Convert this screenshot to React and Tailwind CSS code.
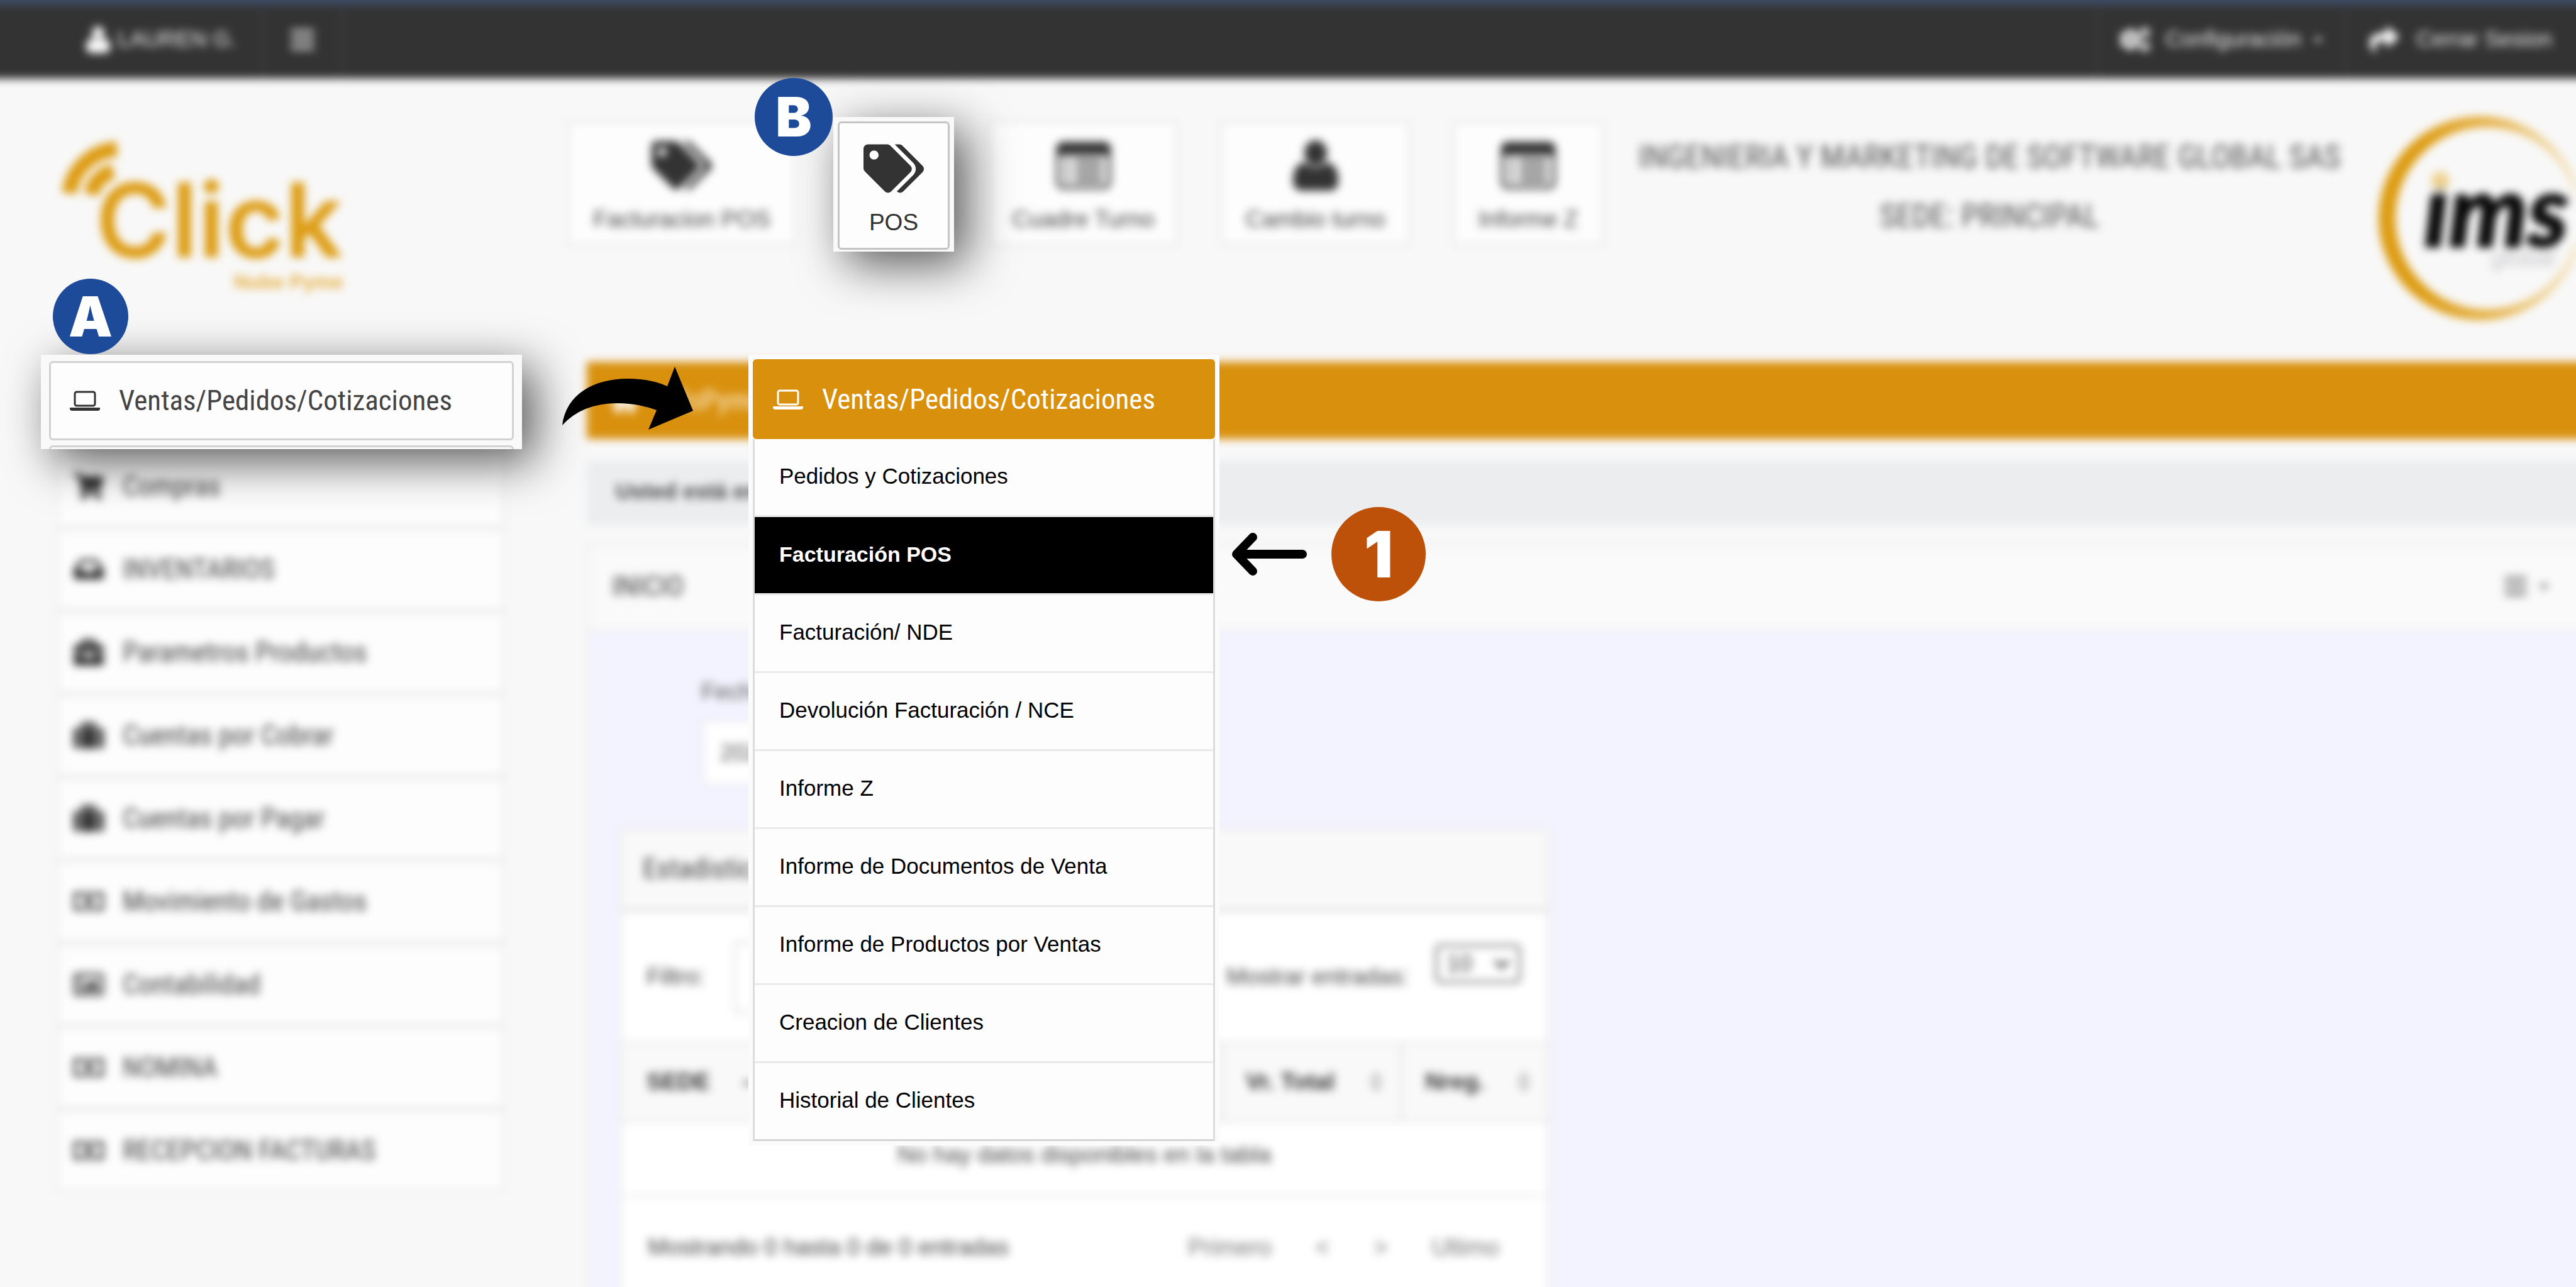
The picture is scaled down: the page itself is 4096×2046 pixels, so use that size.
import React from "react";
import {
  FaTags, FaShoppingCart, FaInbox, FaBriefcase, FaSuitcase, FaRegMoneyBillAlt,
  FaRegImage, FaCogs, FaShare, FaBars, FaCaretDown, FaHome, FaChevronDown,
} from "react-icons/fa";

const BODY = "font-['Liberation_Sans',Arial,sans-serif]";
const TITLE = "font-['Roboto_Condensed','Roboto',sans-serif]";

function Laptop({ className }) {
  return (
    <svg viewBox="0 0 48 32" className={className} fill="none" stroke="currentColor" aria-hidden="true">
      <rect x="8" y="2" width="32" height="22" rx="3" strokeWidth="3" />
      <path d="M0 27h48v2q0 3-4 3H4q-4 0-4-3z" fill="currentColor" stroke="none" />
    </svg>
  );
}

function Person({ className }) {
  return (
    <svg viewBox="0 0 72 80" className={className} fill="currentColor" aria-hidden="true">
      <ellipse cx="36" cy="20" rx="18" ry="20" />
      <path d="M18 35q18 16 36 0 18 4 18 29 0 16-14 16H14Q0 80 0 64q0-25 18-29z" />
    </svg>
  );
}

function ListPanel({ className }) {
  return (
    <svg viewBox="0 0 88 76" className={className} fill="none" stroke="currentColor" aria-hidden="true">
      <rect x="3" y="3" width="82" height="70" rx="8" strokeWidth="5" />
      <path d="M3 10q0-7 8-7h66q8 0 8 7v12H3z" fill="currentColor" stroke="none" />
      <path d="M14 32h8M14 46h8M14 60h8M30 32h44M30 46h44M30 60h44" strokeWidth="6" />
    </svg>
  );
}

function ClickLogo() {
  return (
    <svg viewBox="0 0 460 260" className="h-[260px] w-[460px]" role="img" aria-label="Click Nube Pyme">
      <g fill="none" stroke="#dd9c12" strokeWidth="24">
        <path d="M14 84A82 82 0 0 1 90 14" />
        <path d="M49 86A49 49 0 0 1 84 49" />
      </g>
      <text x="56" y="186" fontFamily="Inter, sans-serif" fontWeight="600" fontSize="163" fill="#dd9c12">Click</text>
      <text x="450" y="236" textAnchor="end" fontFamily="Liberation Sans, sans-serif" fontWeight="700" fontSize="32" fill="#e5ac3c">Nube Pyme</text>
    </svg>
  );
}

function ImsLogo() {
  return (
    <svg viewBox="0 0 320 324" className="mt-[60px] mr-4 h-[324px] w-[320px] shrink-0" role="img" aria-label="ims global">
      <defs>
        <linearGradient id="ring" x1="0" x2="1" y1="0" y2="0">
          <stop offset="0.2" stopColor="#dd9c12" />
          <stop offset="0.6" stopColor="#e6b44c" />
          <stop offset="1" stopColor="#f6e6c4" />
        </linearGradient>
        <linearGradient id="ims" gradientUnits="userSpaceOnUse" x1="0" x2="0" y1="112" y2="118">
          <stop offset="0" stopColor="#efd28f" />
          <stop offset="1" stopColor="#0a0a0a" />
        </linearGradient>
      </defs>
      <path fillRule="evenodd" fill="url(#ring)" d="M168 0a162 162 0 1 0 .1 0zM178 17a145 145 0 1 1-.1 0z" />
      <text x="78" y="207" fontFamily="Lato, sans-serif" fontWeight="900" fontStyle="italic" fontSize="158" fill="url(#ims)" stroke="url(#ims)" strokeWidth="3">ims</text>
      <text x="185" y="238" fontFamily="Liberation Sans, sans-serif" fontStyle="italic" fontSize="38" fill="#c4c4c8">global</text>
    </svg>
  );
}

const shortcuts = [
  { label: "Facturacion POS", width: "w-[366px]", icon: <FaTags className="size-[96px]" /> },
  { label: "POS", width: "w-[172px]", icon: <FaTags className="size-[96px]" /> },
  { label: "Cuadre Turno", width: "w-[303px]", icon: <ListPanel className="h-[76px] w-[88px]" /> },
  { label: "Cambio turno", width: "w-[303px]", icon: <Person className="h-[80px] w-[72px]" /> },
  { label: "Informe Z", width: "w-[242px]", icon: <ListPanel className="h-[76px] w-[88px]" /> },
];

const modules = [
  ["Compras", FaShoppingCart],
  ["INVENTARIOS", FaInbox],
  ["Parametros Productos", FaBriefcase],
  ["Cuentas por Cobrar", FaSuitcase],
  ["Cuentas por Pagar", FaSuitcase],
  ["Movimiento de Gastos", FaRegMoneyBillAlt],
  ["Contabilidad", FaRegImage],
  ["NOMINA", FaRegMoneyBillAlt],
  ["RECEPCION FACTURAS", FaRegMoneyBillAlt],
];

const salesMenu = [
  "Pedidos y Cotizaciones",
  "Facturación POS",
  "Facturación/ NDE",
  "Devolución Facturación / NCE",
  "Informe Z",
  "Informe de Documentos de Venta",
  "Informe de Productos por Ventas",
  "Creacion de Clientes",
  "Historial de Clientes",
];

function TopBar() {
  return (
    <header className="flex h-[141px] shrink-0 border-t-[24px] border-[#3d4c66] bg-[#333] px-4 text-[35px] text-[#f2f2f2]">
      <button className="flex w-[420px] items-center gap-3 border-r-4 border-[#3c3c3c] pb-2 pl-[137px] whitespace-nowrap">
        <Person className="h-[42px] w-[38px] shrink-0 text-white" />
        LAUREN G.
      </button>
      <button aria-label="Menú" className="flex w-[126px] items-center justify-center border-r-4 border-[#3c3c3c] pb-2">
        <FaBars className="size-[42px] text-[#ddd]" />
      </button>
      <button className="ml-auto flex w-[395px] items-center border-l-4 border-[#3c3c3c] pb-2 pl-[34px]">
        <FaCogs className="mr-[24px] size-[48px] shrink-0 text-white" />
        Configuración
        <FaCaretDown className="ml-4 size-[22px] shrink-0" />
      </button>
      <button className="flex w-[368px] items-center border-l-4 border-[#3c3c3c] pb-2 pl-[36px] whitespace-nowrap">
        <FaShare className="mr-[28px] size-[46px] shrink-0 text-white" />
        Cerrar Sesion
      </button>
    </header>
  );
}

function Masthead() {
  return (
    <div className="flex h-[450px] shrink-0 items-start pl-4">
      <div className="w-[901px] shrink-0 pt-[98px] pl-[96px]"><ClickLogo /></div>
      <nav className="flex shrink-0 gap-[66px] pt-[66px]">
        {shortcuts.map((s) => (
          <button key={s.label} className={`${s.width} flex h-[200px] flex-col items-center border-4 border-[#e9e9e9] bg-[#fdfdfd] pt-[28px] text-[37px] text-[#444]`}>
            <span className="flex h-[80px] items-center text-[#333]">{s.icon}</span>
            <span className="mt-[24px] leading-[44px] whitespace-nowrap">{s.label}</span>
          </button>
        ))}
      </nav>
      <div className={`${TITLE} flex-1 pt-[78px] text-center text-[51px] leading-[94px] whitespace-nowrap text-[#555]`}>
        <h1>INGENIERIA Y MARKETING DE SOFTWARE GLOBAL SAS</h1>
        <p>SEDE: PRINCIPAL</p>
      </div>
      <ImsLogo />
    </div>
  );
}

function Sidebar() {
  return (
    <aside className="w-[949px] shrink-0 pt-[128px] pl-[105px]">
      <ul className={`${TITLE} w-[714px] border-x-4 border-b-4 border-[#ececec] text-[44px] text-[#444]`}>
        {modules.map(([label, Icon]) => (
          <li key={label} className="h-[132px] border-t-[8px] border-[#ececec] bg-[#fdfdfd]">
            <a href="#" className="flex h-full items-center pl-[24px]">
              <span className="w-[78px]"><Icon className="size-[48px] text-[#333]" /></span>
              {label}
            </a>
          </li>
        ))}
      </ul>
    </aside>
  );
}

function SortMark() {
  return (
    <svg viewBox="0 0 20 36" className="h-[36px] w-[20px]" fill="none" stroke="#aaa" strokeWidth="3" aria-hidden="true">
      <path d="M3 14l7-10 7 10zM3 22l7 10 7-10z" />
    </svg>
  );
}

function SortedMark() {
  return (
    <svg viewBox="0 0 20 12" className="h-[12px] w-[20px]" fill="#999" aria-hidden="true">
      <path d="M0 12L10 0l10 12z" />
    </svg>
  );
}

function StatsPanel() {
  return (
    <section className="mx-[47px] mt-[64px] flex w-[1480px] flex-1 flex-col border-x-4 border-t-4 border-[#eaeaee] bg-white text-[37px] text-[#444]">
      <h3 className={`${TITLE} flex h-[132px] items-center border-b-[8px] border-[#e8e8e8] bg-[#f9f9f9] pl-[34px] text-[45px]`}>Estadisticas</h3>
      <div className="flex h-[204px] items-start pt-[46px] pr-[42px] pl-[40px]">
        <label htmlFor="filtro" className="mt-[28px] w-[138px]">Filtro:</label>
        <input id="filtro" className="h-[114px] w-[480px] border-4 border-[#e4e4e4] bg-white px-4" />
        <label htmlFor="entradas" className="mt-[28px] mr-[42px] ml-auto">Mostrar entradas:</label>
        <span className="relative mt-[4px]">
          <select id="entradas" className="block h-[62px] w-[136px] appearance-none rounded-lg border-4 border-[#777] bg-white pl-[14px] text-[37px] leading-[44px]">
            <option>10</option>
          </select>
          <FaChevronDown className="pointer-events-none absolute top-[18px] right-[16px] size-[28px] text-[#222]" />
        </span>
      </div>
      <table className="w-full border-collapse">
        <thead>
          <tr className="h-[126px] border-y-4 border-[#ebebeb] bg-[#f9f9f9] text-left text-[37px] text-[#333]">
            <th className="pl-[40px]"><span className="flex items-center gap-[50px]">SEDE <SortedMark /></span></th>
            <th className="w-[285px] border-l-4 border-[#e6e6e6] pl-[36px]"><span className="flex items-center gap-[56px]">Vr. Total <SortMark /></span></th>
            <th className="w-[232px] border-l-4 border-[#e6e6e6] pl-[36px]"><span className="flex items-center gap-[52px]">Nreg. <SortMark /></span></th>
          </tr>
        </thead>
        <tbody>
          <tr className="h-[118px] border-b-4 border-[#ebebeb]">
            <td colSpan={3} className="pb-[12px] text-center">No hay datos disponibles en la tabla</td>
          </tr>
        </tbody>
      </table>
      <div className="flex h-[160px] items-center pr-[76px] pl-[42px]">
        <span>Mostrando 0 hasta 0 de 0 entradas</span>
        <span className="ml-auto flex items-center gap-[70px] text-[38px] text-[#777]">
          <button>Primero</button><button>&lt;</button><button>&gt;</button><button>Ultimo</button>
        </span>
      </div>
    </section>
  );
}

function Content() {
  return (
    <main className="flex flex-1 flex-col">
      <div className={`${TITLE} flex h-[123px] shrink-0 items-center gap-[28px] bg-[#d9900d] pl-[36px] text-[45px] text-[#fbeccf]`}>
        <FaHome className="size-[48px] text-white" />
        <span>InfoPyme</span>
      </div>
      <div className="mt-[35px] flex h-[101px] shrink-0 items-center bg-[#ebedef] pb-1 pl-[46px] text-[35px] font-bold text-[#444]">Usted está en</div>
      <section className="mt-[32px] flex flex-1 flex-col border-t-4 border-l-4 border-[#eeeeee] bg-[#f3f3ff]">
        <div className={`${TITLE} flex h-[135px] shrink-0 items-center border-b-4 border-[#ececf0] bg-[#fafafa] pr-[54px] pb-2 pl-[36px] text-[45px] text-[#444]`}>
          <h2>INICIO</h2>
          <button aria-label="Opciones" className="ml-auto flex items-center gap-[12px] text-[#777]">
            <FaBars className="size-[40px]" />
            <FaCaretDown className="size-[26px]" />
          </button>
        </div>
        <div className="mt-[72px] ml-[178px] flex w-[420px] flex-col text-[37px] text-[#555]">
          <label htmlFor="fecha" className="leading-[46px]">Fecha:</label>
          <input id="fecha" defaultValue="2022" className="mt-[20px] h-[108px] border-4 border-[#e8e8f2] bg-white px-[26px]" />
        </div>
        <StatsPanel />
      </section>
    </main>
  );
}

export default function App() {
  return (
    <div className={`${BODY} relative flex min-h-screen flex-col overflow-hidden bg-[#f8f8f8]`}>
      <div className="-m-4 flex flex-1 flex-col bg-[#f8f8f8] blur-[7px]">
        <TopBar />
        <Masthead />
        <div className="flex flex-1">
          <Sidebar />
          <Content />
        </div>
      </div>

      {/* Highlighted sidebar entry */}
      <div className="absolute top-[564px] left-[65px] h-[150px] w-[765px] bg-[#f9f9f9] px-[13px] pt-[10px] shadow-[20px_20px_75px_rgba(0,0,0,0.65)]">
        <button className={`${TITLE} flex h-[126px] w-full items-center rounded-md border-[3px] border-[#d2d2d2] bg-[#fdfdfd] pl-[30px] text-[45px] text-[#444]`}>
          <Laptop className="mr-[30px] h-[32px] w-[48px] shrink-0 text-[#333]" />
          Ventas/Pedidos/Cotizaciones
        </button>
        <div className="mt-[8px] h-[6px] rounded-t-md border-x-[3px] border-t-[3px] border-[#d2d2d2]" />
      </div>

      {/* Highlighted shortcut */}
      <div className="absolute top-[186px] left-[1325px] h-[214px] w-[192px] bg-[#f9f9f9] p-[7px] shadow-[20px_20px_75px_rgba(0,0,0,0.65)]">
        <button className="flex h-[204px] w-full flex-col items-center rounded-md border-[3px] border-[#c4c4c4] bg-[#fdfdfd] pt-[24px] text-[37px] text-[#333]">
          <FaTags className="size-[96px]" />
          <span className="mt-[16px] leading-[44px]">POS</span>
        </button>
      </div>

      <span className="absolute top-[443px] left-[84px] flex size-[120px] items-center justify-center rounded-full bg-[#1d4a99] font-['Inter',sans-serif] text-[88px] font-black text-white">A</span>
      <span className="absolute top-[124px] left-[1200px] flex size-[124px] items-center justify-center rounded-full bg-[#1d4a99] font-['Inter',sans-serif] text-[86px] font-black text-white">B</span>

      {/* Open sales menu */}
      <nav className="absolute top-[564px] left-[1190px] w-[749px] bg-[#fbfbfb] p-[7px]">
        <button className={`${TITLE} flex h-[127px] w-full items-center rounded-md bg-[#d9900d] pl-[32px] text-[45px] text-white`}>
          <Laptop className="mr-[30px] h-[32px] w-[48px] shrink-0" />
          Ventas/Pedidos/Cotizaciones
        </button>
        <ul className="border-x-[3px] border-[#dcdcdc] bg-[#fdfdfd] text-[35px] text-black">
          {salesMenu.map((item) => (
            <li key={item} className="h-[124px] border-b-[3px] border-[#eaeaea] last:border-[#d4d4d4]">
              <a
                href="#"
                aria-current={item === "Facturación POS" ? "page" : undefined}
                className="flex h-full items-center pb-[2px] pl-[39px] aria-[current=page]:bg-black aria-[current=page]:text-[34px] aria-[current=page]:font-bold aria-[current=page]:text-white"
              >
                {item}
              </a>
            </li>
          ))}
        </ul>
      </nav>

      {/* Curved arrow from the sidebar entry to the menu */}
      <svg viewBox="0 0 208 100" className="absolute top-[583px] left-[894px] h-[100px] w-[208px]" aria-hidden="true">
        <path d="M0 93C6 44 50 19 104 19q36 0 63 12L179 0l29 70-71 30 13-31Q120 58 88 58 32 58 0 93z" />
      </svg>

      {/* Step marker */}
      <svg viewBox="0 0 120 70" className="absolute top-[846px] left-[1958px] h-[70px] w-[120px]" fill="none" stroke="#000" strokeWidth="14" strokeLinecap="round" strokeLinejoin="round" aria-hidden="true">
        <path d="M113 35H9M34 8L8 35l26 27" />
      </svg>
      <span className="absolute top-[806px] left-[2117px] flex size-[150px] items-center justify-center rounded-full bg-[#bd5109] font-['Inter',sans-serif] text-[102px] font-black text-white">1</span>
    </div>
  );
}
